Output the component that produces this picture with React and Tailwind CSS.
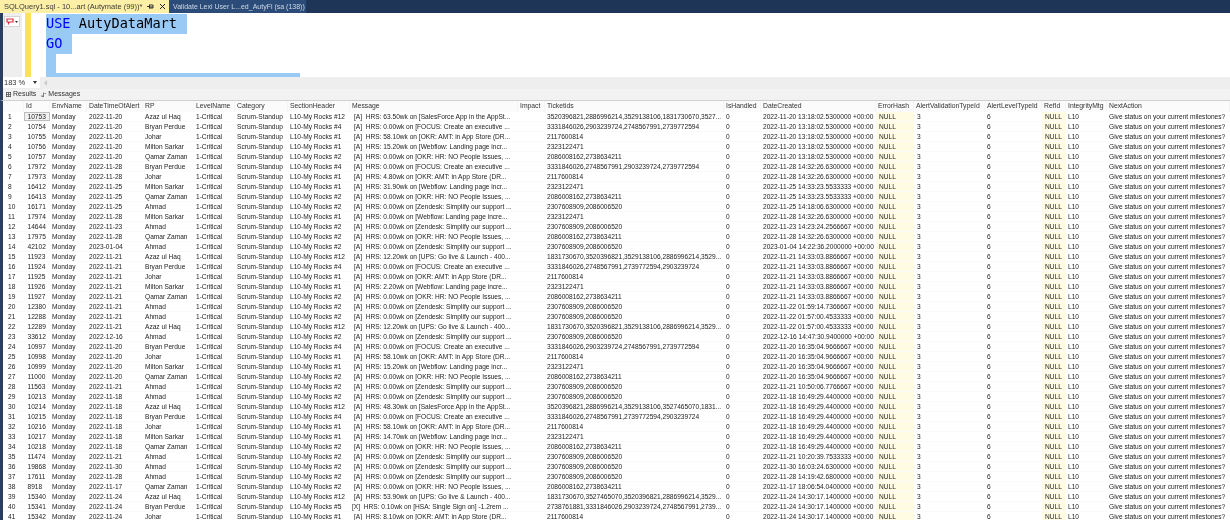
const GRID = "grid grid-cols-[21px_26px_37px_56px_51px_41px_53px_62px_168px_27px_179px_37px_115px_38px_71px_57px_24px_41px_123px]";

const MSG = {
  sf: "[SalesForce App in the AppSt...",
  focus: "[FOCUS: Create an executive ...",
  amt: "[OKR: AMT: in App Store (DR...",
  web: "[Webflow: Landing page incr...",
  webe: "[Webflow: Landing page incre...",
  hr: "[OKR: HR: NO People Issues, ...",
  zen: "[Zendesk: Simplify our support ...",
  ups: "[UPS: Go live & Launch - 400...",
};
const T = {
  amt: "2117600814",
  web: "2323122471",
  hr: "2086008162,2738634211",
  zen: "2307608909,2086006520",
};
const NAME = { a: "Azaz ul Haq", b: "Bryan Perdue", j: "Johar", m: "Milton Sarkar", q: "Qamar Zaman", h: "Ahmad" };

const raw = [
  ["10753", "2022-11-20", "a", "12", "63.50", "sf", "3520396821,2886996214,3529138106,1831730670,3527...", "2022-11-20 13:18:02.5300000"],
  ["10754", "2022-11-20", "b", "4", "0.00", "focus", "3331846026,2903239724,2748567991,2739772594", "2022-11-20 13:18:02.5300000"],
  ["10755", "2022-11-20", "j", "1", "58.10", "amt", T.amt, "2022-11-20 13:18:02.5300000"],
  ["10756", "2022-11-20", "m", "1", "15.20", "web", T.web, "2022-11-20 13:18:02.5300000"],
  ["10757", "2022-11-20", "q", "2", "0.00", "hr", T.hr, "2022-11-20 13:18:02.5300000"],
  ["17972", "2022-11-28", "b", "4", "0.00", "focus", "3331846026,2748567991,2903239724,2739772594", "2022-11-28 14:32:26.6300000"],
  ["17973", "2022-11-28", "j", "1", "4.80", "amt", T.amt, "2022-11-28 14:32:26.6300000"],
  ["16412", "2022-11-25", "m", "1", "31.90", "web", T.web, "2022-11-25 14:33:23.5533333"],
  ["16413", "2022-11-25", "q", "2", "0.00", "hr", T.hr, "2022-11-25 14:33:23.5533333"],
  ["16171", "2022-11-25", "h", "2", "0.00", "zen", T.zen, "2022-11-25 14:18:06.6300000"],
  ["17974", "2022-11-28", "m", "1", "0.00", "webe", T.web, "2022-11-28 14:32:26.6300000"],
  ["14644", "2022-11-23", "h", "2", "0.00", "zen", T.zen, "2022-11-23 14:23:24.2566667"],
  ["17975", "2022-11-28", "q", "2", "0.00", "hr", T.hr, "2022-11-28 14:32:26.6300000"],
  ["42102", "2023-01-04", "h", "2", "0.00", "zen", T.zen, "2023-01-04 14:22:36.2000000"],
  ["11923", "2022-11-21", "a", "12", "12.20", "ups", "1831730670,3520396821,3529138106,2886996214,3529...", "2022-11-21 14:33:03.8866667"],
  ["11924", "2022-11-21", "b", "4", "0.00", "focus", "3331846026,2748567991,2739772594,2903239724", "2022-11-21 14:33:03.8866667"],
  ["11925", "2022-11-21", "j", "1", "0.00", "amt", T.amt, "2022-11-21 14:33:03.8866667"],
  ["11926", "2022-11-21", "m", "1", "2.20", "webe", T.web, "2022-11-21 14:33:03.8866667"],
  ["11927", "2022-11-21", "q", "2", "0.00", "hr", T.hr, "2022-11-21 14:33:03.8866667"],
  ["12380", "2022-11-21", "h", "2", "0.00", "zen", T.zen, "2022-11-22 01:59:14.7366667"],
  ["12288", "2022-11-21", "h", "2", "0.00", "zen", T.zen, "2022-11-22 01:57:00.4533333"],
  ["12289", "2022-11-21", "a", "12", "12.20", "ups", "1831730670,3520396821,3529138106,2886996214,3529...", "2022-11-22 01:57:00.4533333"],
  ["33612", "2022-12-16", "h", "2", "0.00", "zen", T.zen, "2022-12-16 14:47:30.9400000"],
  ["10997", "2022-11-20", "b", "4", "0.00", "focus", "3331846026,2903239724,2748567991,2739772594", "2022-11-20 16:35:04.9666667"],
  ["10998", "2022-11-20", "j", "1", "58.10", "amt", T.amt, "2022-11-20 16:35:04.9666667"],
  ["10999", "2022-11-20", "m", "1", "15.20", "web", T.web, "2022-11-20 16:35:04.9666667"],
  ["11000", "2022-11-20", "q", "2", "0.00", "hr", T.hr, "2022-11-20 16:35:04.9666667"],
  ["11563", "2022-11-21", "h", "2", "0.00", "zen", T.zen, "2022-11-21 10:50:06.7766667"],
  ["10213", "2022-11-18", "h", "2", "0.00", "zen", T.zen, "2022-11-18 16:49:29.4400000"],
  ["10214", "2022-11-18", "a", "12", "48.30", "sf", "3520396821,2886996214,3529138106,3527465070,1831...", "2022-11-18 16:49:29.4400000"],
  ["10215", "2022-11-18", "b", "4", "0.00", "focus", "3331846026,2748567991,2739772594,2903239724", "2022-11-18 16:49:29.4400000"],
  ["10216", "2022-11-18", "j", "1", "58.10", "amt", T.amt, "2022-11-18 16:49:29.4400000"],
  ["10217", "2022-11-18", "m", "1", "14.70", "web", T.web, "2022-11-18 16:49:29.4400000"],
  ["10218", "2022-11-18", "q", "2", "0.00", "hr", T.hr, "2022-11-18 16:49:29.4400000"],
  ["11474", "2022-11-21", "h", "2", "0.00", "zen", T.zen, "2022-11-21 10:20:39.7533333"],
  ["19868", "2022-11-30", "h", "2", "0.00", "zen", T.zen, "2022-11-30 16:03:24.6300000"],
  ["17611", "2022-11-28", "h", "2", "0.00", "zen", T.zen, "2022-11-28 14:19:42.6800000"],
  ["8918", "2022-11-17", "q", "2", "0.00", "hr", T.hr, "2022-11-17 18:06:54.0400000"],
  ["15340", "2022-11-24", "a", "12", "53.90", "ups", "1831730670,3527465070,3520396821,2886996214,3529...", "2022-11-24 14:30:17.1400000"],
  ["15341", "2022-11-24", "b", "5", "X", "", "2738761881,3331846026,2903239724,2748567991,2739...", "2022-11-24 14:30:17.1400000"],
  ["15342", "2022-11-24", "j", "1", "8.10", "amt", T.amt, "2022-11-24 14:30:17.1400000"],
];

const HEAD = ["", "Id", "EnvName", "DateTimeOfAlert", "RP", "LevelName", "Category", "SectionHeader", "Message", "Impact", "Ticketids", "IsHandled", "DateCreated", "ErrorHash", "AlertValidationTypeId", "AlertLevelTypeId", "RefId", "IntegrityMtg", "NextAction"];

function Cell({ children, className = "" }) {
  return <div className={"overflow-hidden whitespace-nowrap pl-[2px] " + className}>{children}</div>;
}

function Row({ r, i }) {
  const [id, date, who, sec, hrs, msg, tickets, created] = r;
  const isX = hrs === "X";
  return (
    <div className={GRID + " h-[10.03px] leading-[10px] text-[#1c1c1c] border-b border-[#fafafa]"}>
      <Cell className="pl-[5px]">{i + 1}</Cell>
      <Cell className={i === 0 ? "bg-[#f1f1f1] outline outline-[#bdbdbd] -outline-offset-1 pl-[3.5px]" : "pl-[3.5px]"}>{id}</Cell>
      <Cell>Monday</Cell>
      <Cell>{date}</Cell>
      <Cell>{NAME[who]}</Cell>
      <Cell className="pl-[1.5px]">1-Critical</Cell>
      <Cell>Scrum-Standup</Cell>
      <Cell className="pl-[2.5px]">L10-My Rocks #{sec}</Cell>
      <Cell className={isX ? "pl-[2.5px] whitespace-pre" : "pl-[4px] whitespace-pre"}>
        {isX ? "[X]  HRS: 0.10wk on [HSA: Single Sign on] -1.2rem ..." : `[A]  HRS: ${hrs}wk on ${MSG[msg]}`}
      </Cell>
      <Cell></Cell>
      <Cell className="pl-[2.5px]">{tickets}</Cell>
      <Cell>0</Cell>
      <Cell>{created} +00:00</Cell>
      <Cell className="bg-[#fffce3] pl-[3px]">NULL</Cell>
      <Cell className="pl-[3px]">3</Cell>
      <Cell>6</Cell>
      <Cell className="bg-[#fffce3] pl-[3px]">NULL</Cell>
      <Cell>L10</Cell>
      <Cell>Give status on your current milestones?</Cell>
    </div>
  );
}

export default function App() {
  return (
    <div className="w-[1230px] h-[520px] overflow-hidden flex flex-col bg-white font-['Liberation_Sans',sans-serif] blur-[0.25px]">
      {/* document tabs */}
      <div className="h-[13px] shrink-0 flex bg-[#1f3557] leading-[13px]">
        <div className="w-[169px] bg-[#fdf0a6] text-[#3a3a3a] pl-[4px] text-[7.5px] flex items-center justify-between pr-[3px]">
          <span className="whitespace-nowrap">SQLQuery1.sql - 10...art (Autymate (99))*</span>
          <span className="flex items-center gap-[5px] text-[#333]">
            <svg width="7" height="7" viewBox="0 0 7 7" fill="none" stroke="#333" strokeWidth="1"><path d="M0 3.5h2.5M2.5 1.500v4M2.500 2h3.500v3h-3.500M2.500 4h3.500" /></svg>
            <svg width="7" height="7" viewBox="0 0 7 7" fill="none" stroke="#222" strokeWidth="1"><path d="M1 1l5 5M6 1l-5 5" /></svg>
          </span>
        </div>
        <div className="w-[137px] bg-[#2b4c78] text-[#cfd9e6] pl-[4px] text-[7px] whitespace-nowrap">Validate Lexi User L...ed_AutyFi (sa (138))</div>
      </div>

      {/* editor */}
      <div className="h-[64px] shrink-0 flex border-l-[3px] border-[#2b3e5f] overflow-hidden">
        <div className="w-[19px] bg-[#eeeeee] pl-[1px] pt-[3px]">
          <div className="w-[16px] h-[11px] bg-white border border-[#d5d5d5] flex items-center justify-center gap-[1px]">
            <svg width="8" height="7" viewBox="0 0 8 7" fill="none" stroke="#e0303f" strokeWidth="1.200"><path d="M1 1h6v3h-3.500l-1 1.500v-1.500h-1.500z" /></svg>
            <svg width="3" height="2" viewBox="0 0 3 2"><path d="M0 0h3l-1.500 2z" fill="#333" /></svg>
          </div>
        </div>
        <div className="w-[3px] bg-white" />
        <div className="w-[6px] bg-[#fbe25a]" />
        <div className="w-[15px] bg-white" />
        <div className="flex-1 pt-[1px] font-['DejaVu_Sans_Mono',monospace] text-[13.6px] leading-[19.5px] text-black">
          <div className="w-[141px] h-[20px] bg-[#99c9f5] whitespace-pre"><span className="text-[#0000ff]">USE</span> AutyDataMart</div>
          <div className="w-[26px] h-[19.5px] bg-[#99c9f5] text-[#0000ff]">GO</div>
          <div className="w-[10px] h-[19px] bg-[#99c9f5]" />
          <div className="w-[254px] h-[5px] bg-[#99c9f5]" />
        </div>
      </div>

      {/* zoom bar */}
      <div className="h-[12px] shrink-0 bg-[#eeeeee] flex border-l-[3px] border-[#2b3e5f] text-[7.5px] leading-[11px] text-[#333]">
        <div className="w-[37px] h-[11px] bg-white flex items-center justify-between pl-[1px] pr-[3px]">
          <span>183 %</span>
          <svg width="4" height="3" viewBox="0 0 4 3"><path d="M0 0h4l-2 3z" fill="#333" /></svg>
        </div>
        <svg className="ml-[3px] mt-[3px]" width="4" height="6" viewBox="0 0 4 6"><path d="M4 0v6l-3-3z" fill="#c8c8c8" /></svg>
      </div>

      {/* results tabs */}
      <div className="h-[12px] shrink-0 bg-[#f2f2f2] flex items-center gap-[5px] border-l-[3px] border-[#2b3e5f] pl-[3px] text-[7px] text-[#333] border-b border-b-[#d0d0d0]">
        <span className="flex items-center gap-[2px]">
          <svg width="5" height="5" viewBox="0 0 5 5" fill="none" stroke="#555" strokeWidth="0.8"><path d="M0 .5h5M0 2.5h5M0 4.500h5M.5 0v5M2.500 0v5M4.500 0v5" /></svg>
          Results
        </span>
        <span className="flex items-center gap-[2px]">
          <svg width="5" height="5" viewBox="0 0 5 5" fill="none" stroke="#666" strokeWidth="0.8"><path d="M.5 4.500h2M1 3v1.500M2.500 .5v4.500M3.500 1.500h1.500" /></svg>
          Messages
        </span>
      </div>

      {/* results grid */}
      <div className="flex-1 overflow-hidden border-l-[3px] border-[#2b3e5f] text-[6.6px]">
        <div className={GRID + " h-[10.5px] leading-[10.5px] bg-[#fbfbfb] text-[#333] text-[6.8px]"}>
          {HEAD.map((h, i) => (
            <div key={i} className="overflow-hidden whitespace-nowrap pl-[2px] border-r border-[#f4f4f4]">{h}</div>
          ))}
        </div>
        {raw.map((r, i) => <Row key={i} r={r} i={i} />)}
      </div>
    </div>
  );
}
